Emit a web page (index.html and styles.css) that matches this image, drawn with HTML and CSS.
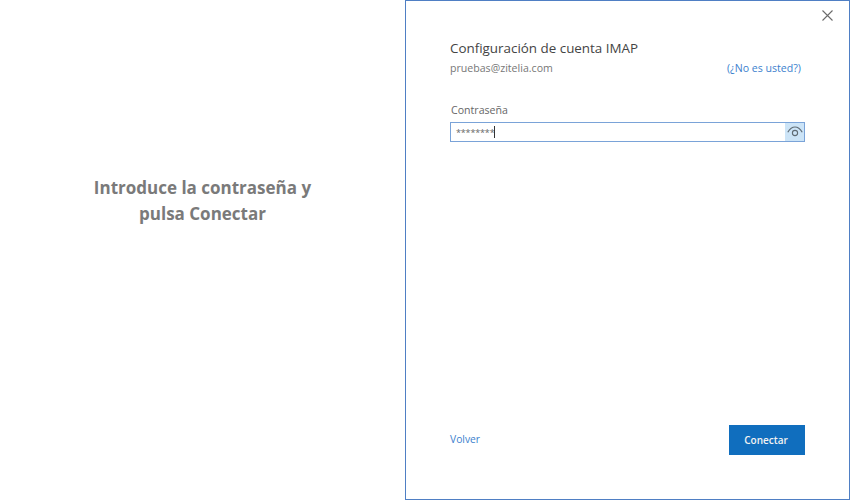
FILE: index.html
```html
<!DOCTYPE html>
<html lang="es">
<head>
    <meta charset="UTF-8" />
    <title>Configuración de cuenta IMAP</title>
    <link rel="stylesheet" href="styles.css">
</head>
<body>
    <div class="hint">
        <p>Introduce la contraseña y<br>pulsa Conectar</p>
    </div>
    <div class="dialog">
        <div class="close-row">
            <svg class="close" width="11" height="11" viewBox="0 0 11 11">
                <path d="M0.5 0.5L10.5 10.5M10.5 0.5L0.5 10.5" stroke="#6b6b6b" stroke-width="1.1" fill="none" />
            </svg>
        </div>
        <h1 class="title">Configuración de cuenta IMAP</h1>
        <div class="account">
            <span class="email">pruebas@zitelia.com</span>
            <a class="link not-you">(¿No es usted?)</a>
        </div>
        <label class="pass-label">Contraseña</label>
        <div class="pass-box">
            <span class="stars">********</span>
            <span class="caret"></span>
            <span class="eye">
                <svg width="16" height="12" viewBox="0 0 16 12">
                    <path d="M0.8 6.2C3 2.6 5.5 1 8 1S13 2.6 15.2 6.2" stroke="#5f6b74" stroke-width="1.2" fill="none" />
                    <circle cx="8" cy="7" r="2.6" stroke="#5f6b74" stroke-width="1.1" fill="none" />
                </svg>
            </span>
        </div>
        <div class="footer">
            <a class="link back">Volver</a>
            <button class="connect">Conectar</button>
        </div>
    </div>
</body>
</html>
```

FILE: styles.css
```css
body {
    margin: 0;
    width: 850px;
    height: 500px;
    display: flex;
    background: #fff;
    overflow: hidden;
    font-family: 'Open Sans', sans-serif;
}

.hint {
    width: 405px;
    display: flex;
    justify-content: center;
    padding-top: 175px;
    box-sizing: border-box;
}

.hint p {
    margin: 0;
    text-align: center;
    color: #7a7a7a;
    font-size: 17px;
    font-weight: 700;
    line-height: 25.5px;
}

.dialog {
    width: 445px;
    height: 500px;
    box-sizing: border-box;
    border: 1px solid #4f7fc4;
    padding: 0 44px;
    display: flex;
    flex-direction: column;
}

.close-row {
    height: 39px;
    display: flex;
    justify-content: flex-end;
    align-items: flex-start;
    margin-right: -28px;
    padding-top: 9px;
    box-sizing: border-box;
}

.title {
    margin: 0;
    font-size: 13.4px;
    font-weight: 400;
    color: #444;
    line-height: 16px;
}

.account {
    display: flex;
    justify-content: space-between;
    align-items: center;
    margin-top: 3px;
    padding: 0 4px 0 0;
    height: 18px;
}

.email {
    font-size: 10.6px;
    color: #777;
}

.link {
    color: #3c7fce;
    font-size: 10.6px;
}

.pass-label {
    margin: 25px 0 0 1px;
    font-size: 10.6px;
    line-height: 16px;
    color: #666;
}

.pass-box {
    margin-top: 4px;
    height: 18px;
    border: 1px solid #7aa3d8;
    display: flex;
    align-items: center;
    padding-left: 5px;
}

.stars {
    font-size: 9px;
    color: #666;
    letter-spacing: -0.15px;
}

.caret {
    width: 1px;
    height: 12px;
    background: #333;
}

.eye {
    margin-left: auto;
    width: 19px;
    height: 18px;
    background: #cce4f7;
    display: flex;
    align-items: center;
    justify-content: center;
}

.footer {
    margin-top: auto;
    margin-bottom: 44px;
    display: flex;
    justify-content: space-between;
    align-items: center;
}

.back {
    font-size: 10.3px;
    margin-bottom: 2px;
}

.connect {
    width: 76px;
    height: 30px;
    border: none;
    padding: 0 8px 0 6px;
    background: #106ebe;
    color: #f2f2f2;
    font-family: inherit;
    font-size: 10px;
    font-weight: 600;
}
```
